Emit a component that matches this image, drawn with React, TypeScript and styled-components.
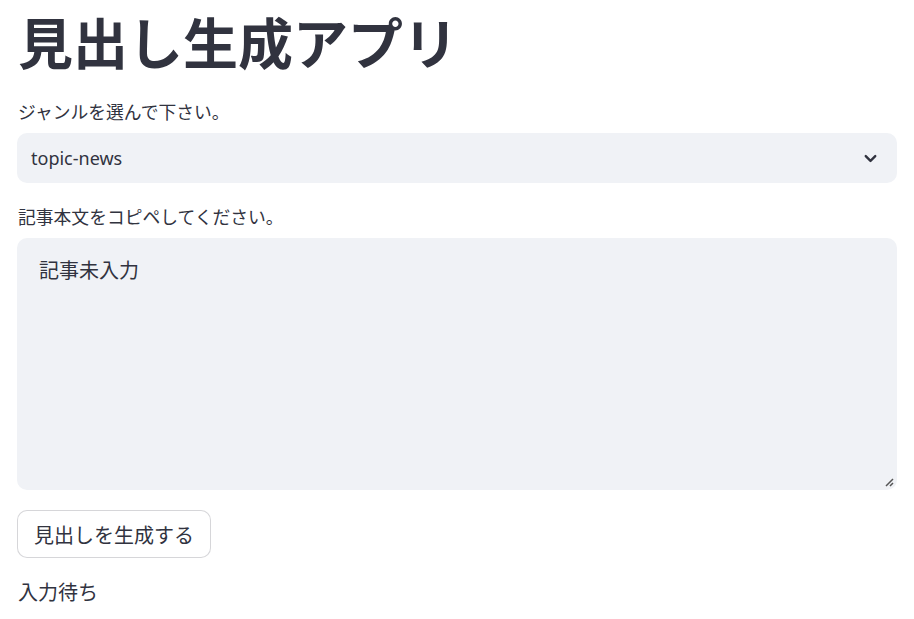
import styled, { createGlobalStyle } from "styled-components";

const GlobalStyle = createGlobalStyle`
  html, body {
    margin: 0;
    padding: 0;
    background: #ffffff;
  }
  body {
    font-family: "Noto Sans", "Noto Sans CJK JP", sans-serif;
    color: #31333f;
  }
`;

export default function App() {
  return (
    <>
      <GlobalStyle />
      <Main>
        <Title>見出し生成アプリ</Title>

        <Field>
          <Label>ジャンルを選んで下さい。</Label>
          <Select>
            <SelectValue>topic-news</SelectValue>
            <Chevron viewBox="0 0 24 24">
              <path d="M6 9l6 6 6-6" />
            </Chevron>
          </Select>
        </Field>

        <Field $spaced>
          <Label>記事本文をコピペしてください。</Label>
          <TextArea>
            <TextValue>記事未入力</TextValue>
            <Grip viewBox="0 0 12 12">
              <path d="M10 3L3 10M10 7L7 10" />
            </Grip>
          </TextArea>
        </Field>

        <ButtonRow>
          <Button>見出しを生成する</Button>
        </ButtonRow>

        <Status>入力待ち</Status>
      </Main>
    </>
  );
}

const Main = styled.main`
  display: flex;
  flex-direction: column;
  padding: 4px 17px 0 17px;
  width: 914px;
  box-sizing: border-box;
`;

const Title = styled.h1`
  margin: 0 0 0 1px;
  font-size: 55px;
  line-height: 78px;
  font-weight: 700;
  color: #31333f;
`;

const Field = styled.div<{ $spaced?: boolean }>`
  display: flex;
  flex-direction: column;
  gap: 10px;
  margin-top: ${(p) => (p.$spaced ? "23px" : "19px")};
`;

const Label = styled.label`
  margin-left: 1px;
  font-size: 17.8px;
  line-height: 22px;
  color: #31333f;
`;

const Select = styled.div`
  display: flex;
  align-items: center;
  justify-content: space-between;
  height: 50px;
  padding: 0 17px 0 14px;
  background: #f0f2f6;
  border-radius: 10px;
  box-sizing: border-box;
`;

const SelectValue = styled.span`
  font-size: 18px;
  color: #31333f;
`;

const Chevron = styled.svg`
  width: 19px;
  height: 19px;
  fill: none;
  stroke: #31333f;
  stroke-width: 3;
  stroke-linecap: round;
  stroke-linejoin: round;
`;

const TextArea = styled.div`
  position: relative;
  height: 252px;
  padding: 20px 22px;
  background: #f0f2f6;
  border-radius: 10px;
  box-sizing: border-box;
`;

const TextValue = styled.span`
  font-size: 20px;
  line-height: 26px;
  color: #31333f;
`;

const Grip = styled.svg`
  position: absolute;
  right: 2px;
  bottom: 2px;
  width: 12px;
  height: 12px;
  fill: none;
  stroke: #555;
  stroke-width: 1.5;
`;

const ButtonRow = styled.div`
  display: flex;
  margin-top: 20px;
`;

const Button = styled.button`
  height: 48px;
  padding: 0 16px;
  font-family: "Noto Sans", "Noto Sans CJK JP", sans-serif;
  font-size: 20px;
  color: #31333f;
  background: #ffffff;
  border: 1px solid rgba(49, 51, 63, 0.2);
  border-radius: 10px;
`;

const Status = styled.p`
  margin: 22px 0 0 1px;
  font-size: 20px;
  line-height: 26px;
  color: #31333f;
`;
